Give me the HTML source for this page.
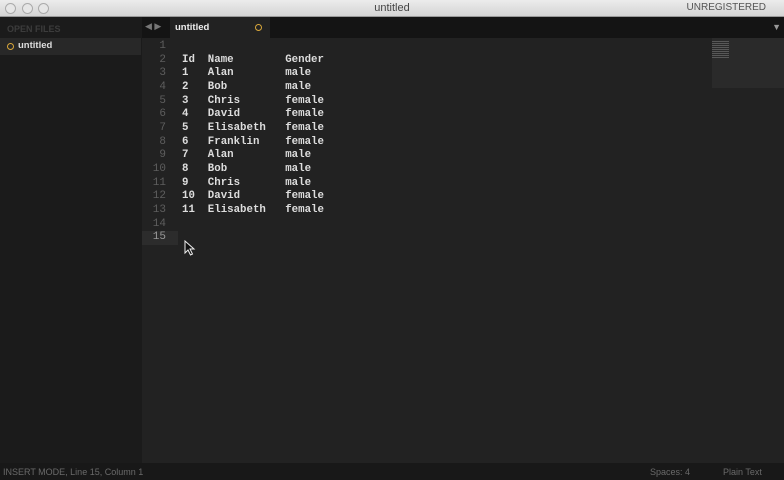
<!DOCTYPE html>
<html><head><style>
body{margin:0;width:784px;height:480px;overflow:hidden;background:#222;font-family:"Liberation Sans",sans-serif;position:relative}
.title{position:absolute;left:0;top:0;width:784px;height:17px;background:linear-gradient(#ececec,#d4d4d4);border-bottom:1px solid #999;box-sizing:border-box}
.title .t{position:absolute;left:0;width:784px;text-align:center;top:2px;font-size:11px;color:#444}
.title .u{position:absolute;right:18px;top:2px;font-size:10px;color:#555}
.btn{position:absolute;top:3px;width:9px;height:9px;border:1px solid #aaa;border-radius:50%;background:#e6e6e6}
.side{position:absolute;left:0;top:17px;width:142px;height:446px;background:#1b1b1b}
.side .h{position:absolute;left:7px;top:7px;font-size:9px;color:#3c3c3c;font-weight:bold}
.side .f{position:absolute;left:0;top:21px;width:141px;height:17px;background:#282828}
.side .f span{position:absolute;left:18px;top:2px;font-size:9.5px;color:#ddd;font-weight:bold}
.dot{position:absolute;width:5px;height:5px;border:1.3px solid #d9a73a;border-radius:50%}
.tabs{position:absolute;left:142px;top:17px;width:642px;height:21px;background:#141414}
.tab{position:absolute;left:28px;top:0;width:100px;height:21px;background:#222}
.tab span{position:absolute;left:5px;top:5px;font-size:9.5px;color:#eee;font-weight:bold}
.ln{position:absolute;left:142px;top:40px;width:24px;text-align:right;font:11px/13.65px "Liberation Mono",monospace;color:#5e5e5e;white-space:pre}
.code{position:absolute;left:182px;top:40px;font:bold 10.75px/13.65px "Liberation Mono",monospace;color:#ddd;white-space:pre}
.cur{position:absolute;left:142px;top:231px;width:36px;height:14px;background:#2c2c2c}
.mini{position:absolute;left:712px;top:38px;width:72px;height:50px;background:#2a2a2a}
.status{position:absolute;left:0;top:463px;width:784px;height:17px;background:#181818;font-size:9px;color:#6a6a6a}
.status span{position:absolute;top:4px}
</style></head><body>
<div class="title"><div class="btn" style="left:5px"></div><div class="btn" style="left:22px"></div><div class="btn" style="left:38px"></div><div class="t">untitled</div><div class="u">UNREGISTERED</div></div>
<div class="side"><div class="h">OPEN FILES</div><div class="f"><div class="dot" style="left:7px;top:5px"></div><span>untitled</span></div></div>
<div class="tabs"><span style="position:absolute;left:3px;top:4px;font-size:9px;color:#777">◀ ▶</span><div class="tab"><span>untitled</span><div class="dot" style="left:85px;top:7px"></div></div><span style="position:absolute;right:3px;top:5px;font-size:9px;color:#999">▼</span></div>
<div class="cur"></div>
<div class="ln">1
2
3
4
5
6
7
8
9
10
11
12
13
14
<span style="color:#999">15</span></div>
<div class="code">
Id  Name        Gender
1   Alan        male
2   Bob         male
3   Chris       female
4   David       female
5   Elisabeth   female
6   Franklin    female
7   Alan        male
8   Bob         male
9   Chris       male
10  David       female
11  Elisabeth   female</div>
<div class="mini"><div style="position:absolute;left:0;top:3px;width:17px;height:18px;background:repeating-linear-gradient(#777 0 1px,transparent 1px 2px);opacity:.6"></div></div>
<svg style="position:absolute;left:184px;top:240px" width="12" height="16"><path d="M1 1L1 13L4 10L6.5 15L8.5 14L6 9L10 9Z" fill="#111" stroke="#eee" stroke-width="1"/></svg>
<div class="status"><span style="left:3px">INSERT MODE, Line 15, Column 1</span><span style="left:650px">Spaces: 4</span><span style="left:723px">Plain Text</span></div>
</body></html>
